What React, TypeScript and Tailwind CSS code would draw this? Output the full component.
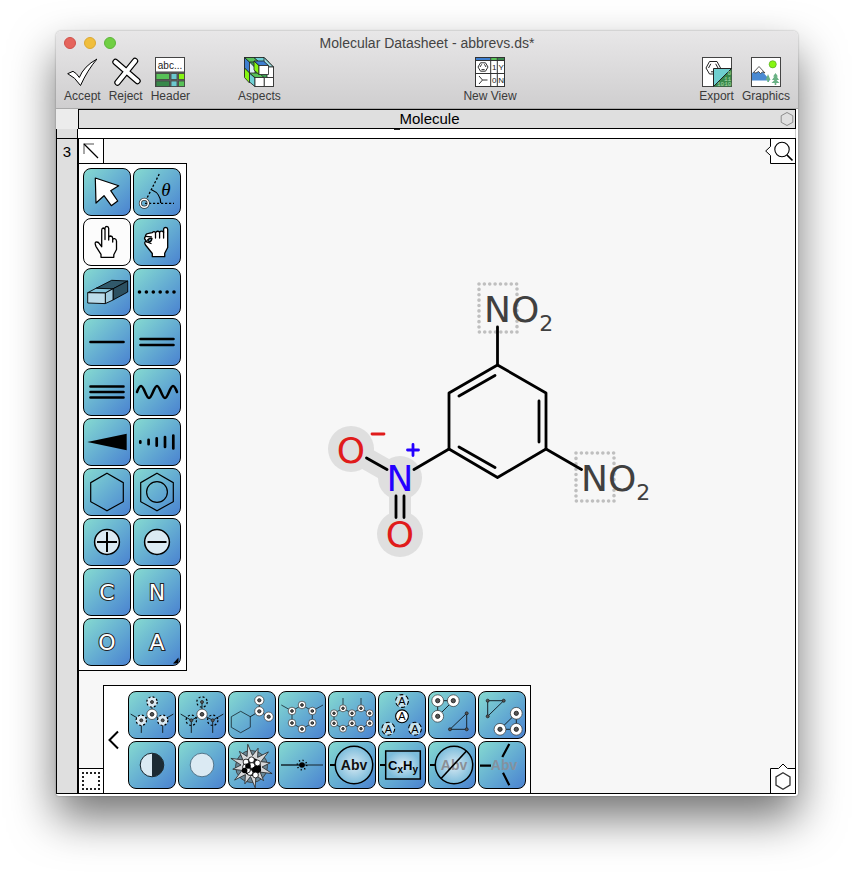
import React from "react";

const INK = "#000";
const PALE = "#dbeaf3";

type Pt = [number, number];

const Line = ({ a, b, w = 1, c = "#16242c" }: { a: Pt; b: Pt; w?: number; c?: string }) => (
  <line x1={a[0]} y1={a[1]} x2={b[0]} y2={b[1]} stroke={c} strokeWidth={w} strokeLinecap="round" />
);

const Atom = ({ at, r = 4.6 }: { at: Pt; r?: number }) => (
  <g>
    <circle cx={at[0]} cy={at[1]} r={r} fill="#fff" stroke="#333" strokeWidth="0.7" />
    <circle cx={at[0]} cy={at[1]} r={r * 0.36} fill="#555" stroke="#222" strokeWidth="0.9" />
  </g>
);

const GhostAtom = ({ at, fill = "none", r = 5.2 }: { at: Pt; fill?: string; r?: number }) => (
  <g>
    <circle cx={at[0]} cy={at[1]} r={r} fill={fill} stroke={INK} strokeWidth="1.2" strokeDasharray="2 2.08" />
    <circle cx={at[0]} cy={at[1]} r="1.5" fill="#555" stroke="#222" strokeWidth="0.8" />
  </g>
);

const Dot = ({ at }: { at: Pt }) => <circle cx={at[0]} cy={at[1]} r="1.5" fill="#555" stroke="#222" strokeWidth="0.8" />;

const Abv = ({ x, fill }: { x: number; fill: string }) => (
  <text x={x} y="29" textAnchor="middle" fill={fill} className="font-['Liberation_Sans_Narrow','Liberation_Sans',sans-serif] text-[14px] font-bold">
    Abv
  </text>
);

const Element = ({ s }: { s: string }) => (
  <text
    x="24"
    y="32"
    textAnchor="middle"
    fill="#fff"
    stroke="#222"
    strokeWidth="2"
    paintOrder="stroke"
    className="font-['DejaVu_Sans',sans-serif] text-[22px]"
  >
    {s}
  </text>
);

type Tool = { name: string; art: React.ReactNode; on?: boolean };

const hexagon = "M24 5.3L40.3 14.7V33.7L24 42.7L7.7 33.7V14.7Z";

const drawTools: Tool[] = [
  {
    name: "Select",
    art: <path d="M12.3 10L35.7 17.7L27.7 22.7L34.7 33L28.3 37.7L21 27.7L13 35Z" fill="#fff" stroke={INK} strokeWidth="1.2" strokeLinejoin="round" />,
  },
  {
    name: "Angle",
    art: (
      <g fill="none" stroke={INK} strokeWidth="1.3">
        <path d="M12.5 33L26.3 6M12 35.3H41" strokeDasharray="2.2 1.8" />
        <path d="M19 22C24 24 27.7 29 27.7 35" />
        <circle cx="11.3" cy="35.3" r="4" stroke="#333" strokeWidth="3" />
        <circle cx="11.3" cy="35.3" r="4" stroke="#fff" strokeWidth="1.5" />
        <text x="33" y="28" textAnchor="middle" fill={INK} stroke="none" className="font-['Liberation_Serif',serif] text-[19px] italic">
          θ
        </text>
      </g>
    ),
  },
  {
    name: "Point",
    on: true,
    art: (
      <path
        d="M18 39.3V36.3L12.9 28.3Q11.6 25 12.6 24.2Q15.3 23.4 16.6 26L18.7 28.7V12Q18.9 10 20.3 10Q21.8 10.2 22 12V21.5V10Q22.3 8.4 23.9 8.4Q25.5 8.6 25.7 10.4V22V19.6Q26 18 27.6 18Q29.5 18.2 29.7 20V24V21.6Q30.2 20.4 31.6 20.6Q33.3 21 33.5 23V31.5L30.8 36.8V39.3Z"
        fill="#fff"
        stroke={INK}
        strokeWidth="1.3"
        strokeLinejoin="round"
      />
    ),
  },
  {
    name: "Grab",
    art: (
      <g stroke={INK} strokeWidth="1.3" strokeLinejoin="round" strokeLinecap="round">
        <path
          d="M19.3 38.7V35.5L12.5 27Q11 24 12.5 23.5L14 24L11.7 21Q11 19.3 13 18.3L12.5 17.5Q13 15.6 15.5 15.3L19.3 14.6Q21 12.8 22.6 14.6Q24.5 12.2 26.6 14Q28.6 12 30.6 14.2V11Q31 9.4 32.8 9.4Q34.6 9.6 34.7 11.4V29.5L31.7 35.3V38.7Z"
          fill="#fff"
        />
        <path d="M22.5 15V20M26.6 14V20M30.6 14V20M14 24L18 25.5M12.5 18.3L18.4 18.8" fill="none" />
        <path d="M14.6 22Q16.5 19.8 19 20.4Q18.4 23.8 16.4 24Z" fill="#6ab4d2" />
      </g>
    ),
  },
  {
    name: "Erase",
    art: (
      <g stroke={INK} strokeWidth="0.9" strokeLinejoin="round">
        <path d="M13 20.3L28.7 12.3L44.7 13L30 20.8Z" fill="#31596b" />
        <path d="M30 20.8L44.7 13V24L30 32Z" fill="#2c5061" />
        <path d="M4.7 24.7L13 20.3L30 20.8L22.3 25Z" fill="#83c4dc" />
        <path d="M22.3 25L30 20.8V32L22.3 35.6Z" fill="#9fcbe0" />
        <path d="M4.7 24.7L22.3 25V35.6L4.7 35Z" fill="#bcdcea" />
      </g>
    ),
  },
  {
    name: "Dotted bond",
    art: (
      <g>
        {[6.5, 13.4, 20.3, 27.2, 34.1, 41].map((x) => (
          <circle key={x} cx={x} cy="24" r="1.8" />
        ))}
      </g>
    ),
  },
  { name: "Single bond", art: <path d="M7.5 24H40.5" stroke={INK} strokeWidth="2.6" strokeLinecap="round" /> },
  { name: "Double bond", art: <path d="M7.5 21H40.5M7.5 27H40.5" stroke={INK} strokeWidth="2.6" strokeLinecap="round" /> },
  { name: "Triple bond", art: <path d="M7.5 18.5H40.5M7.5 24H40.5M7.5 29.5H40.5" stroke={INK} strokeWidth="2.6" strokeLinecap="round" /> },
  {
    name: "Wavy bond",
    art: (
      <path
        d="M4 24C5.5 20 6.5 18 8 18C11 18 13 30 16 30C19 30 21 18 24 18C27 18 29 30 32 30C35 30 37 18 40 18C41.5 18 42.5 20 44 24"
        fill="none"
        stroke={INK}
        strokeWidth="2.5"
        strokeLinecap="round"
      />
    ),
  },
  { name: "Wedge bond", art: <path d="M4.3 24L43.7 15.7V32.3Z" /> },
  {
    name: "Hashed bond",
    art: <path d="M7.3 23.3V24.7M15.6 21.8V26.2M23.7 20.3V27.7M32 19V29M40.3 17.6V30.4" stroke={INK} strokeWidth="2.7" strokeLinecap="round" />,
  },
  { name: "Ring", art: <path d={hexagon} fill="none" stroke={INK} strokeWidth="1.2" /> },
  {
    name: "Aromatic ring",
    art: (
      <g fill="none" stroke={INK} strokeWidth="1.2">
        <path d={hexagon} />
        <circle cx="24" cy="24" r="10.4" />
      </g>
    ),
  },
  {
    name: "Positive charge",
    art: (
      <g stroke={INK}>
        <circle cx="24" cy="24" r="12.4" fill={PALE} strokeWidth="1.5" />
        <path d="M14 24H34M24 14V34" strokeWidth="2" />
      </g>
    ),
  },
  {
    name: "Negative charge",
    art: (
      <g stroke={INK}>
        <circle cx="24" cy="24" r="12.4" fill={PALE} strokeWidth="1.5" />
        <path d="M14.5 24H33.5" strokeWidth="2" />
      </g>
    ),
  },
  { name: "Carbon", art: <Element s="C" /> },
  { name: "Nitrogen", art: <Element s="N" /> },
  { name: "Oxygen", art: <Element s="O" /> },
  {
    name: "Other element",
    art: (
      <g>
        <Element s="A" />
        <path d="M40 45.5H45.5V39.5Z" />
      </g>
    ),
  },
];

const starPoints = (n: number, outer: number, inner: number, cx: number, cy: number) =>
  Array.from({ length: n * 2 }, (_, i) => {
    const r = i % 2 ? inner : outer - (i % 4 ? 3 : 0);
    const t = (i * Math.PI) / n - Math.PI / 2 - 0.17;
    return `${(cx + r * Math.cos(t)).toFixed(1)},${(cy + r * Math.sin(t)).toFixed(1)}`;
  }).join(" ");

const LetterA = ({ at, ghost }: { at: Pt; ghost?: boolean }) => (
  <g>
    <circle
      cx={at[0]}
      cy={at[1]}
      r="6.4"
      fill={ghost ? "#c5e2ee" : "#fff"}
      stroke={INK}
      strokeWidth="1.1"
      strokeDasharray={ghost ? "4 2.7" : undefined}
    />
    <text x={at[0]} y={at[1] + 4} textAnchor="middle" className="font-['Liberation_Sans',sans-serif] text-[11px]">
      A
    </text>
  </g>
);

const fused: Pt[] = [[6, 22.3], [15, 17.3], [24, 22.3], [33, 17.3], [41.7, 22.3], [41.7, 32.3], [33, 37.7], [24, 32.3], [15, 37.7], [6, 32.3]];
const six: Pt[] = [[14, 20], [24, 14], [34.3, 20], [34.3, 32], [24, 38], [14, 32]];

const editTools: Tool[] = [
  {
    name: "Show neighbours",
    art: (
      <g>
        <Line a={[24, 11]} b={[24, 23]} />
        <Line a={[3, 23.3]} b={[13.3, 29.3]} />
        <Line a={[45, 23.3]} b={[34.7, 29.3]} />
        <Line a={[13.3, 29.3]} b={[13.3, 41.5]} />
        <Line a={[34.7, 29.3]} b={[34.7, 41.5]} />
        <Line a={[13.3, 29.3]} b={[24, 23.3]} />
        <Line a={[34.7, 29.3]} b={[24, 23.3]} />
        <GhostAtom at={[24, 11]} fill={PALE} />
        <GhostAtom at={[13.3, 29.3]} fill={PALE} />
        <GhostAtom at={[34.7, 29.3]} fill={PALE} />
        <Atom at={[24, 23.3]} r={5.2} />
      </g>
    ),
  },
  {
    name: "Hide neighbours",
    art: (
      <g>
        <Line a={[24, 11]} b={[24, 23]} />
        <Line a={[3, 23.3]} b={[13.3, 29.3]} />
        <Line a={[45, 23.3]} b={[34.7, 29.3]} />
        <Line a={[13.3, 29.3]} b={[13.3, 41.5]} />
        <Line a={[34.7, 29.3]} b={[34.7, 41.5]} />
        <Line a={[13.3, 29.3]} b={[24, 23.3]} />
        <Line a={[34.7, 29.3]} b={[24, 23.3]} />
        <GhostAtom at={[24, 11]} />
        <GhostAtom at={[13.3, 29.3]} />
        <GhostAtom at={[34.7, 29.3]} />
        <Atom at={[24, 23.3]} r={5.2} />
      </g>
    ),
  },
  {
    name: "Select side chain",
    art: (
      <g>
        <path d="M12.7 20.3L22.3 25.7V36.3L12.7 41.7L3.3 36.3V25.7Z" fill="none" stroke="#16242c" strokeWidth="0.8" />
        <Line a={[22.3, 25.7]} b={[31.3, 20.3]} />
        <Line a={[31.3, 9.3]} b={[31.3, 20.3]} />
        <Line a={[40.7, 25.7]} b={[31.3, 20.3]} />
        <Atom at={[31.3, 9.3]} />
        <Atom at={[31.3, 20.3]} />
        <Atom at={[40.7, 25.7]} />
      </g>
    ),
  },
  {
    name: "Select ring",
    art: (
      <g>
        <path d="M14 20L24 14L34.3 20V32L24 38L14 32ZM3.3 14L14 20M45 14L34.3 20" fill="none" stroke="#16242c" strokeWidth="0.8" />
        {six.map((p) => (
          <Atom key={p.join()} at={p} r={3.8} />
        ))}
      </g>
    ),
  },
  {
    name: "Select ring system",
    art: (
      <g>
        <path d="M6 22.3L15 17.3L24 22.3L33 17.3L41.7 22.3V32.3L33 37.7L24 32.3L15 37.7L6 32.3ZM24 22.3V32.3M15 17V7M33 17V7" fill="none" stroke="#16242c" strokeWidth="0.8" />
        {fused.map((p) => (
          <Atom key={p.join()} at={p} r={3.5} />
        ))}
      </g>
    ),
  },
  {
    name: "Select same element",
    art: (
      <g>
        <LetterA at={[24, 10]} ghost />
        <LetterA at={[24, 25.3]} />
        <LetterA at={[10.3, 37.7]} ghost />
        <LetterA at={[37, 37.7]} ghost />
      </g>
    ),
  },
  {
    name: "Previous component",
    art: (
      <g>
        <path d="M9.7 25.3V9.7H25.3ZM38.7 22.3V38.3H22Z" fill="none" stroke="#16242c" />
        <Atom at={[9.7, 9.7]} r={5.9} />
        <Atom at={[25.3, 9.7]} r={5.9} />
        <Atom at={[9.7, 25.3]} r={5.9} />
        <Dot at={[38.7, 22.3]} />
        <Dot at={[38.7, 38.3]} />
        <Dot at={[22, 38.3]} />
      </g>
    ),
  },
  {
    name: "Next component",
    art: (
      <g>
        <path d="M9.7 25.3V9.7H25.7ZM38.3 22.3V38.3H22Z" fill="none" stroke="#16242c" />
        <Dot at={[9.7, 9.7]} />
        <Dot at={[25.7, 9.7]} />
        <Dot at={[9.7, 25.3]} />
        <Atom at={[38.3, 22.3]} r={5.9} />
        <Atom at={[38.3, 38.3]} r={5.9} />
        <Atom at={[22, 38.3]} r={5.9} />
      </g>
    ),
  },
  {
    name: "Invert selection",
    art: (
      <g>
        <circle cx="24" cy="24" r="11.8" fill={PALE} stroke="#16242c" />
        <path d="M24 12.2A11.8 11.8 0 0 1 24 35.8Z" fill="#1c2b34" />
      </g>
    ),
  },
  { name: "Clear selection", art: <circle cx="24" cy="24" r="11.8" fill={PALE} stroke="#4c6c80" strokeWidth="0.9" /> },
  {
    name: "Clean up",
    art: (
      <g>
        <circle cx="23.5" cy="25.5" r="16" fill="#6a8796" stroke="#333" strokeWidth="0.8" />
        <polygon points={starPoints(12, 22, 10.5, 23.5, 25)} fill="#d6d8da" stroke="#222" strokeWidth="0.8" />
        <circle cx="24" cy="26" r="9" fill="#000" />
        {([[18, 21], [23.5, 18.8], [24, 24.5], [29.5, 22], [17.5, 26], [22, 31.5], [27.5, 34], [19.5, 29]] as Pt[]).map((p) => (
          <circle key={p.join()} cx={p[0]} cy={p[1]} r="2.9" fill="#fff" stroke="#000" strokeWidth="0.8" />
        ))}
        {([[30.3, 29], [20, 25], [27, 28.5], [16.6, 29.5]] as Pt[]).map((p) => (
          <circle key={p.join()} cx={p[0]} cy={p[1]} r="2.8" fill="#000" />
        ))}
      </g>
    ),
  },
  {
    name: "Centre bond",
    art: (
      <g>
        <path d="M3 24H24" stroke="#16242c" strokeWidth="1.7" />
        <path d="M24 24H45" stroke="#16242c" strokeWidth="1.2" />
        <circle cx="24" cy="24" r="2.8" />
        <circle cx="24" cy="24" r="4.7" fill="none" stroke={INK} strokeWidth="1.5" strokeDasharray="1.2 2.49" />
      </g>
    ),
  },
  {
    name: "Abbreviate",
    art: (
      <g>
        <circle cx="26" cy="24" r="18.7" fill="url(#glow)" stroke={INK} strokeWidth="1.5" />
        <path d="M2 24H7.3" stroke={INK} strokeWidth="2" />
        <Abv x={26} fill="#111" />
      </g>
    ),
  },
  {
    name: "Formula abbreviation",
    art: (
      <g>
        <rect x="7.7" y="10" width="34.6" height="28" fill="url(#glow)" stroke={INK} strokeWidth="1.5" />
        <path d="M2 24H7.7" stroke={INK} strokeWidth="2" />
        <text x="25" y="29" textAnchor="middle" className="font-['Liberation_Sans_Narrow','Liberation_Sans',sans-serif] text-[13px] font-bold">
          C<tspan dy="3" className="text-[10px]">x</tspan>
          <tspan dy="-3">H</tspan>
          <tspan dy="3" className="text-[10px]">y</tspan>
        </text>
      </g>
    ),
  },
  {
    name: "Remove abbreviation",
    art: (
      <g>
        <circle cx="26" cy="24" r="18.7" fill="url(#glow)" stroke={INK} strokeWidth="1.5" />
        <path d="M2 24H7.3" stroke={INK} strokeWidth="2" />
        <Abv x={26} fill="#8a8f96" />
        <path d="M13.3 37.3L38.7 9.7" stroke={INK} strokeWidth="1.6" />
      </g>
    ),
  },
  {
    name: "Expand abbreviation",
    art: (
      <g>
        <Abv x={26} fill="#84929f" />
        <path d="M2 24.7H13M31.3 3L24.3 16M25 31.7L31.3 44.3" stroke={INK} strokeWidth="2.2" />
      </g>
    ),
  },
];

const ToolButton = ({ tool }: { tool: Tool }) => (
  <button
    type="button"
    aria-label={tool.name}
    aria-pressed={!!tool.on}
    className={
      tool.on
        ? "size-12 overflow-hidden rounded-lg border border-black bg-[#fcfcfc]"
        : "size-12 overflow-hidden rounded-lg border border-black bg-linear-to-br from-[#86dad0] to-[#4b82d0]"
    }
  >
    <svg viewBox="1 1 46 46" className="size-full" aria-hidden="true">
      {tool.art}
    </svg>
  </button>
);

const actionArt = {
  accept: <path d="M.7 16.7L6 14.3Q9.5 16 12.3 20.5Q17 9 30 2Q20.5 13 13.5 28.5Q8 20 .7 16.7Z" fill="#fff" stroke={INK} strokeLinejoin="round" />,
  reject: (
    <g strokeLinecap="round" strokeLinejoin="round">
      <path d="M4.5 5L26.500 24M24 4L6.500 25.500" stroke={INK} strokeWidth="6.400" />
      <path d="M4.5 5L26.500 24M24 4L6.500 25.500" stroke="#fff" strokeWidth="4.200" />
    </g>
  ),
  header: (
    <g stroke="#444">
      <rect x=".5" y=".5" width="29" height="29" fill="#666" />
      <rect x=".5" y=".5" width="29" height="14.5" fill="#fff" />
      <g strokeWidth=".8">
        <rect x="1" y="16.5" width="13.5" height="6" fill="#58c258" />
        <rect x="16" y="16.5" width="6" height="6" fill="#6cc8cf" />
        <rect x="23.5" y="16.5" width="6" height="6" fill="#86f612" />
        <rect x="1" y="24" width="13.5" height="5.5" fill="#38884a" />
        <rect x="16" y="24" width="6" height="5.5" fill="#6cc8cf" />
        <rect x="23.5" y="24" width="6" height="5.5" fill="#58c258" />
      </g>
      <text x="15" y="11.5" textAnchor="middle" stroke="none" fill="#222" className="font-['Liberation_Sans',sans-serif] text-[10px]">
        abc...
      </text>
    </g>
  ),
  aspects: (
    <g stroke="#222" strokeWidth=".8" strokeLinejoin="round">
      <path d="M.5.5H20L29.5 10V29.5H11L.5 19Z" fill="#3f9f55" />
      <path d="M.5.5L5.5 5V16L.5 11Z" fill="#3e7fd0" />
      <path d="M5.5 5L11 10.5V21L5.5 16Z" fill="#dff0f8" />
      <path d="M.5 11L5.5 16V26L.5 20.5Z" fill="#86f612" />
      <path d="M5.5 16L11 21V29.5L5.5 25Z" fill="#6fd0d4" />
      <path d="M.5.5H10L15 5H5.5Z" fill="#58c258" />
      <path d="M10 .5H20L24.5 5H15Z" fill="#6fd0d4" />
      <path d="M20 .5L29.5 10H25L20 5Z" fill="#9fdde0" />
      <path d="M5.5 16H15L20 20.5H11Z" fill="#58c258" />
      <rect x="11" y="20.5" width="9.3" height="9" fill="#fff" />
      <rect x="20.3" y="20.5" width="9.2" height="9" fill="#fff" />
      <rect x="23" y="10" width="6.5" height="10.5" fill="#fff" />
      <path d="M10 4L15 8.5V17.5L10 13Z" fill="#86f612" />
      <path d="M10 4H19.5L24.5 8.5H15Z" fill="#3e7fd0" />
      <rect x="15" y="8.5" width="9.5" height="9" fill="#fff" />
    </g>
  ),
  view: (
    <g stroke="#333" fill="none">
      <rect x=".5" y=".5" width="29" height="29" fill="#fff" />
      <path d="M1 1H15.5V3.5H1Z" fill="#3e7fd0" stroke="none" />
      <path d="M16 1H22V3.5H16Z" fill="#58c258" stroke="none" />
      <path d="M22.5 1H29V3.5H22.5Z" fill="#38884a" stroke="none" />
      <path d="M.5 3.5H29.5M.5 16.5H29.5M15.7.5V29.5M22.3.5V29.5" />
      <path d="M3 10L5.5 5.8H10.5L13 10L10.5 14.2H5.5ZM5 10L6.7 7.3M9.4 7.3L11 10M6.5 12.6H9.6" />
      <path d="M4 19L7.5 23L4 27M7.5 23H12.5" />
      <g stroke="none" fill="#222" className="font-['Liberation_Sans',sans-serif] text-[8px]">
        <text x="17" y="13">1</text>
        <text x="23.5" y="13">Y</text>
        <text x="17" y="26">0</text>
        <text x="23.3" y="26">N</text>
      </g>
    </g>
  ),
  export: (
    <g stroke="#222" fill="none">
      <rect x=".5" y=".5" width="29" height="29" fill="#fff" stroke="#444" />
      <path d="M4 11L7.5 4.5H15L18.5 11L15 17H7.5ZM6.5 11L8.8 6.8M13.7 6.8L16 11M9 14.8H14" />
      <path d="M11.5 11.5H29.5L11.5 29.5Z" fill="#6fcfd0" />
      <path d="M29.5 11.5V29.5H11.5Z" fill="#38884a" stroke="none" />
      <path d="M11.5 29.5L29.5 11.5" />
      <g stroke="none" fill="#a9dcb0" className="font-['Liberation_Mono',monospace] text-[6px]">
        <text x="25.5" y="18">0</text>
        <text x="22" y="23.5">11</text>
        <text x="15" y="29">1010</text>
      </g>
    </g>
  ),
  graphics: (
    <g>
      <rect x=".5" y=".5" width="29" height="29" fill="#fff" stroke="#444" />
      <path d="M1 16L8 11L19 23V23.500H1Z" fill="#4a8ad2" />
      <path d="M2.500 15.500L8 9.500L14 16L11.500 15L9.500 16.500L7.500 14.500L5 16Z" fill="#fff" stroke="#333" strokeWidth=".8" />
      <circle cx="21.7" cy="7.3" r="3.6" fill="#86f612" stroke="#4b9a20" strokeWidth=".6" />
      <path d="M17 17L19.5 23H18V25H16.3V23H14.7ZM24.5 16L27 19.5H25.7L28 23H25.5L28.5 26H25.3V28H23.7V26H20.5L23.5 23H21L23.4 19.5H22Z" fill="#69b184" />
    </g>
  ),
};

const Action = ({ label, art }: { label: string; art: React.ReactNode }) => (
  <button type="button" className="flex flex-col items-center gap-px text-xs leading-4 text-[#3a3a3a]">
    <svg viewBox="0 0 30 30" className="size-[30px]" aria-hidden="true">
      {art}
    </svg>
    {label}
  </button>
);

const NitroLabel = ({ x, y }: { x: number; y: number }) => (
  <g>
    <rect x={x - 19} y={y - 25} width="38" height="48" fill="none" stroke="#bfbfbf" strokeWidth="3.6" strokeLinecap="round" strokeDasharray="0 5.375" />
    <text x={x - 14} y={y + 13} fill="#404040" className="font-['DejaVu_Sans',sans-serif] text-[36px]">
      NO<tspan dy="9" className="text-[22px]">2</tspan>
    </text>
  </g>
);

const Molecule = () => (
  <svg viewBox="0 0 716 654" role="img" aria-label="Trinitrobenzene" className="absolute inset-0 size-full">
    <g stroke="#dfdfdf" strokeWidth="22" fill="#dfdfdf">
      <path d="M272 311L321 339V396" fill="none" />
      <circle cx="272" cy="310" r="23" stroke="none" />
      <circle cx="321" cy="339" r="22" stroke="none" />
      <circle cx="321" cy="395" r="23" stroke="none" />
    </g>
    <NitroLabel x={419} y={170} />
    <NitroLabel x={516} y={339} />
    <g stroke="#000" strokeWidth="2.8" strokeLinecap="round" strokeLinejoin="round" fill="none">
      <path d="M418.500 226L467 254V310L418.500 338.500L370 310V254Z" />
      <path d="M416 236.500L380 257M460 262V303M380 308L416 328.500" />
      <path d="M418.500 226V188M467 310L502.500 330.500M370 310L335 330.500M287.500 319L308 330.500" />
      <path d="M317 357V378.500M325 357V378.500" />
    </g>
    <g textAnchor="middle" className="font-['DejaVu_Sans',sans-serif] text-[36px]">
      <text x="272" y="324" fill="#e01b1b">O</text>
      <text x="321" y="352" fill="#2400ff">N</text>
      <text x="321" y="408" fill="#e01b1b">O</text>
    </g>
    <path d="M293 295H305" stroke="#e01b1b" strokeWidth="2.8" strokeLinecap="round" />
    <path d="M328.500 311H339.500M334 305.500V316.500" stroke="#2400ff" strokeWidth="2.8" strokeLinecap="round" />
  </svg>
);

export default function App() {
  return (
    <div className="flex min-h-screen bg-white px-14 pt-[31px] pb-20 font-['Liberation_Sans',Arial,sans-serif]">
      <svg className="absolute size-0" aria-hidden="true">
        <defs>
          <radialGradient id="glow">
            <stop offset="0" stopColor="#d9eaf3" />
            <stop offset="1" stopColor="#7cbcdb" />
          </radialGradient>
        </defs>
      </svg>
      <main className="flex flex-1 flex-col overflow-hidden rounded-t-[5px] rounded-b-[3px] bg-white pb-0.5 shadow-[0_22px_45px_rgba(0,0,0,0.55),0_0_2px_rgba(0,0,0,0.35)]">
        <header className="border-b border-[#a9a9a9] bg-linear-to-b from-[#e8e7e8] to-[#cfcecf] pb-1">
          <div className="flex h-6 items-center px-2">
            <div className="flex w-[54px] gap-2">
              <button type="button" aria-label="Close" className="size-3 rounded-full border border-[#d0504a] bg-[#e5645c]" />
              <button type="button" aria-label="Minimize" className="size-3 rounded-full border border-[#dba832] bg-[#f0be3c]" />
              <button type="button" aria-label="Zoom" className="size-3 rounded-full border border-[#5db53a] bg-[#70cf43]" />
            </div>
            <h1 className="flex-1 pr-[54px] text-center text-sm text-[#444]">Molecular Datasheet - abbrevs.ds*</h1>
          </div>
          <div className="flex justify-between px-2 pt-0.5">
            <div className="flex gap-2">
              <Action label="Accept" art={actionArt.accept} />
              <Action label="Reject" art={actionArt.reject} />
              <Action label="Header" art={actionArt.header} />
              <div className="w-8" />
              <Action label="Aspects" art={actionArt.aspects} />
            </div>
            <Action label="New View" art={actionArt.view} />
            <div className="flex gap-2">
              <Action label="Export" art={actionArt.export} />
              <Action label="Graphics" art={actionArt.graphics} />
            </div>
          </div>
        </header>

        <div className="mr-0.5 flex flex-1 flex-col border-b border-black">
          <div className="flex h-5">
            <div className="w-[22px] bg-[#ececec]" />
            <div className="flex flex-1 items-center border border-black bg-[#dfdfdf] pr-px text-[15px]">
              <h2 className="flex-1 text-center">Molecule</h2>
              <svg viewBox="0 0 14 14" className="size-3.5" aria-hidden="true">
                <path d="M7 .5L12.800 3.700V10.300L7 13.500L1.200 10.300V3.700Z" fill="none" stroke="#8c8c8c" />
              </svg>
            </div>
          </div>

          <div className="flex h-[9px]">
            <div className="w-[22px] border-x border-black bg-[#dfdfdf]" />
            <div className="flex flex-1 justify-center border-r border-[#ccc] bg-white pr-20">
              <div className="h-px w-1.5 bg-[#222]" />
            </div>
          </div>

          <div className="flex flex-1 border-t border-black">
            <div className="w-[22px] border-x border-black bg-[#dfdfdf] pt-1 text-center text-[15px] leading-[18px]">3</div>
            <section className="relative flex flex-1 flex-col justify-between border-x border-black bg-[#f7f7f7]">
              <Molecule />
              <div className="relative flex items-start justify-between">
                <div>
                  <button type="button" aria-label="Collapse tools" className="block h-6 w-[25px] border-r border-black bg-white">
                    <svg viewBox="0 0 24 24" className="size-6" fill="none" aria-hidden="true">
                      <path d="M5 15V5H15" stroke="#8a8a8a" strokeWidth="1.5" />
                      <path d="M5 5L19 19" stroke="#000" strokeWidth="1.3" />
                    </svg>
                  </button>
                  <div className="grid grid-cols-2 gap-0.5 border-y border-r border-black bg-white py-1 pr-[5px] pl-1">
                    {drawTools.map((t) => (
                      <ToolButton key={t.name} tool={t} />
                    ))}
                  </div>
                </div>
                <button type="button" aria-label="Search">
                  <svg viewBox="0 0 30 25" className="block h-[25px] w-[30px]" fill="none" stroke="#000" aria-hidden="true">
                    <path d="M5.500 0V7.500L.7 12L5.500 16.500V24.500H30V0Z" fill="#fff" stroke="none" />
                    <path d="M5.500 0V7.500L.7 12L5.500 16.500V24.500H30" />
                    <circle cx="17" cy="10.500" r="7.200" strokeWidth="1.100" />
                    <path d="M22 16L27.500 21.500" strokeWidth="1.700" />
                  </svg>
                </button>
              </div>

              <div className="relative flex items-end justify-between">
                <div className="flex items-end">
                  <button type="button" aria-label="Marquee" className="h-[25px] w-6 border-t border-black bg-white">
                    <svg viewBox="0 0 24 24" className="size-6" aria-hidden="true">
                      <path d="M3 4H21M3 20H21" stroke="#222" strokeWidth="2" strokeDasharray="2 2" />
                      <path d="M4 3V21M20 3V21" stroke="#222" strokeWidth="2" strokeDasharray="2 2" />
                    </svg>
                  </button>
                  <div className="flex border-x border-t border-black bg-white pt-[5px] pr-1 pb-1">
                    <button type="button" aria-label="Collapse palette" className="flex w-6 items-center justify-center">
                      <svg viewBox="0 0 16 20" className="h-5 w-4" fill="none" aria-hidden="true">
                        <path d="M10 1.500L1.500 10L10 18.500" stroke="#000" strokeWidth="2" />
                      </svg>
                    </button>
                    <div className="grid grid-cols-8 gap-0.5">
                      {editTools.map((t) => (
                        <ToolButton key={t.name} tool={t} />
                      ))}
                    </div>
                  </div>
                </div>
                <button type="button" aria-label="Templates">
                  <svg viewBox="0 0 25 31" className="block h-[31px] w-[25px]" fill="none" stroke="#000" aria-hidden="true">
                    <path d="M.5 31V6.500H8.500L13 2L17.500 6.500H25V31Z" fill="#fff" stroke="none" />
                    <path d="M.5 31V6.500H8.500L13 2L17.500 6.500H25" />
                    <path d="M13 10.800L20 14.900V23.100L13 27.200L6 23.100V14.900Z" stroke="#333" strokeWidth="1.300" />
                  </svg>
                </button>
              </div>
            </section>
          </div>
        </div>
      </main>
    </div>
  );
}
